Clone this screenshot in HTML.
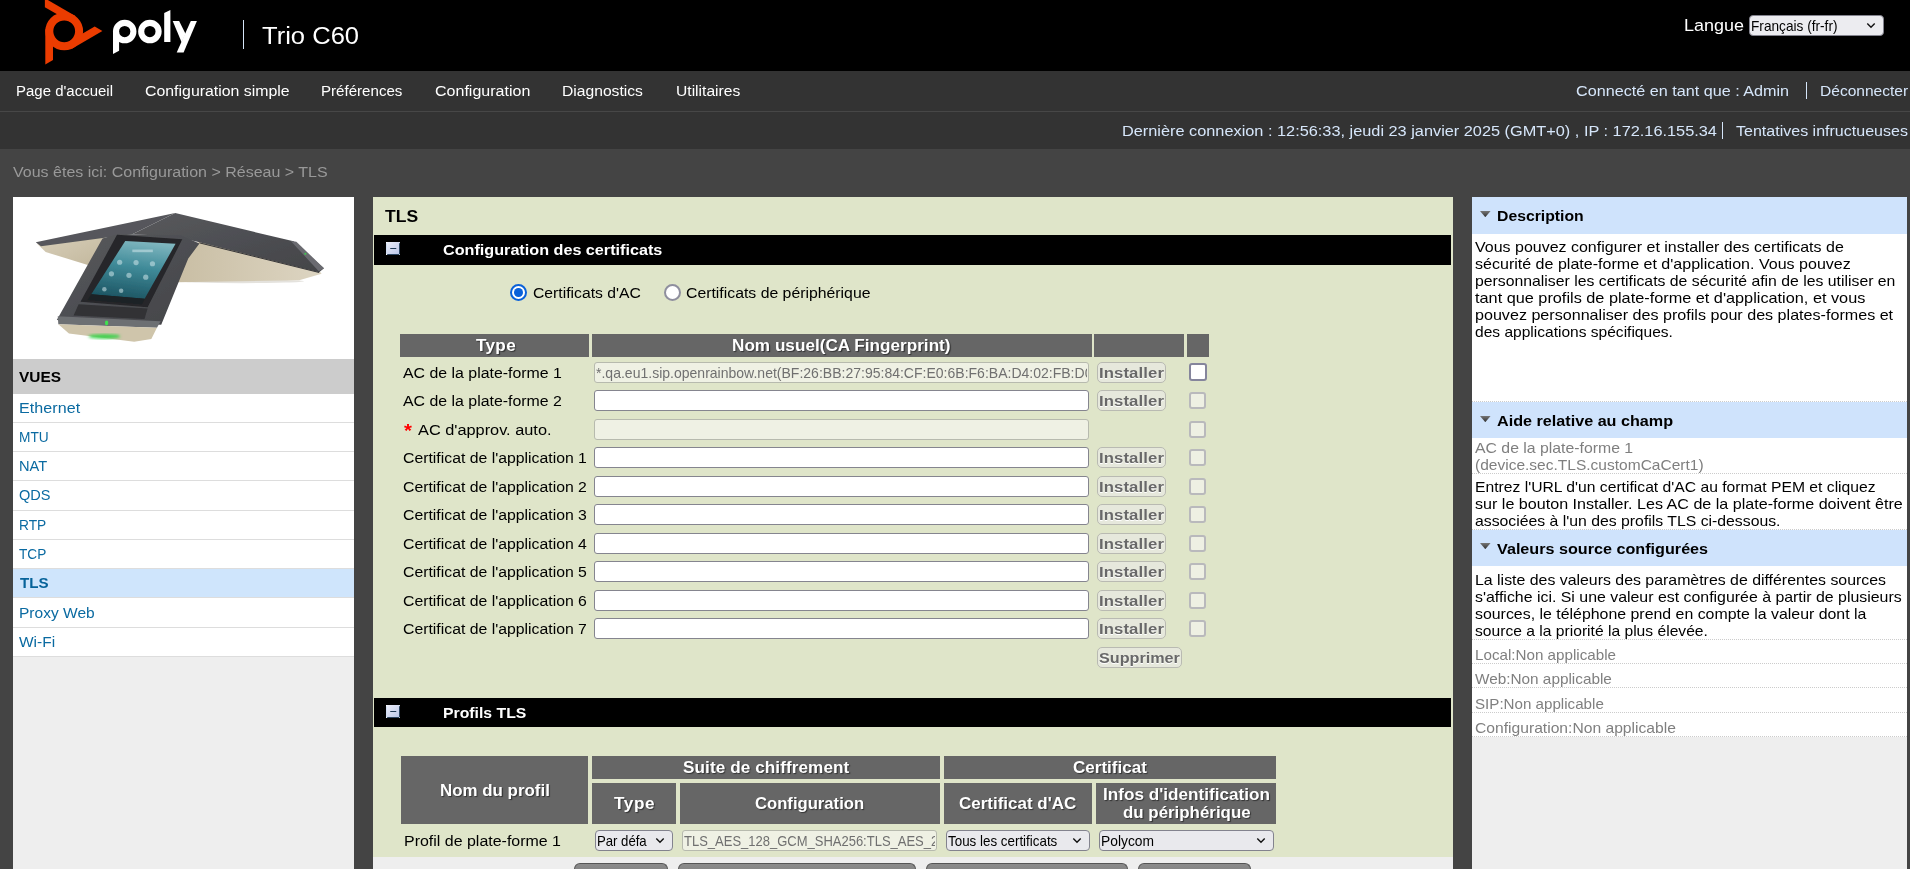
<!DOCTYPE html>
<html lang="fr"><head><meta charset="utf-8"><title>Poly Trio C60 - TLS</title>
<style>
html,body{margin:0;padding:0}
html{width:1910px;height:869px;overflow:hidden}
body{width:1910px;height:869px;overflow:hidden;position:relative;background:#444;font-family:"Liberation Sans",sans-serif;}
.a{position:absolute}
.t{position:absolute;white-space:pre;line-height:normal;transform-origin:0 0;font-family:"Liberation Sans",sans-serif}
.th{position:absolute;background:#666}
.inp{position:absolute;box-sizing:border-box;height:20.3px;border:1px solid #85858f;border-radius:3px;background:#fff;overflow:hidden}
.inp.dis{background:#eff1e4;border-color:#b7baae}
.btn{position:absolute;box-sizing:border-box;height:20.4px;border:1px solid #b9bab2;border-radius:5px;background:#e6e8dc}
.cb{position:absolute;box-sizing:border-box;width:17px;height:17px;border:2px solid #b9b9bc;border-radius:3px;background:#eef0e3}
.cb.on{width:17.6px;height:17.6px;border:2px solid #85859c;background:#fff}
.sel{position:absolute;box-sizing:border-box;height:20.5px;border:1px solid #83838e;border-radius:4px;background:#e9e9ed}
.li{position:absolute;left:13px;width:341px;background:#fff;border-bottom:1px solid #ddd;box-sizing:border-box}
.dot{position:absolute;left:1472px;width:435px;height:0;border-top:1px dotted #ccc}
.rh{position:absolute;left:1472px;width:435px;background:#cfe3fc}
.tri{position:absolute;width:0;height:0;border-left:5.2px solid transparent;border-right:5.2px solid transparent;border-top:6px solid #555}
.bb{position:absolute;top:863px;height:6px;box-sizing:border-box;border:1px solid #555;border-bottom:none;border-radius:7px 7px 0 0;background:linear-gradient(#8b8b8b,#868686)}
</style></head>
<body>
<!-- header -->
<div class="a" style="left:0;top:0;width:1910px;height:71px;background:#000"></div>
<svg class="a" style="left:0;top:0" width="240" height="71" viewBox="0 0 240 71">
<g transform="translate(64.2,31.3)" fill="#eb3c00">
<circle r="14.9" fill="none" stroke="#eb3c00" stroke-width="8"/>
<polygon id="bl" points="-18.9,-2 -18.9,33.2 -11.2,28.75 -11.2,-2"/>
<polygon points="-18.9,-2 -18.9,33.2 -11.2,28.75 -11.2,-2" transform="rotate(120)"/>
<polygon points="-18.9,-2 -18.9,33.2 -11.2,28.75 -11.2,-2" transform="rotate(240)"/>
</g>
<g fill="#fff">
<circle cx="124.7" cy="31.6" r="8.7" fill="none" stroke="#fff" stroke-width="6.1"/>
<polygon points="113,31.6 119.1,31.6 119.1,50.8 113,54.1"/>
<circle cx="149.9" cy="31.6" r="8.7" fill="none" stroke="#fff" stroke-width="6.1"/>
<polygon points="164.2,12.9 170.4,10 170.4,41.9 164.2,41.9"/>
<polygon points="190.8,21.1 196.9,21.1 183.6,52.4 176.7,52.4"/>
<polygon points="172.7,21.1 179.1,21.1 185.6,34 181.6,42.2"/>
</g>
</svg>

<div class="a" style="left:243px;top:20px;width:1px;height:29px;background:#d5e5f7"></div>
<div class="sel" style="left:1749px;top:15px;width:134.5px;height:21px;background:#ececf0"></div>
<svg class="a" style="left:1866px;top:22px" width="10" height="8" viewBox="0 0 10 8"><path d="M1.3 1.6 L5 5.3 L8.7 1.6" fill="none" stroke="#111" stroke-width="1.4"/></svg>
<!-- nav -->
<div class="a" style="left:0;top:71px;width:1910px;height:39.5px;background:#333"></div>
<div class="a" style="left:0;top:110.5px;width:1910px;height:1px;background:#474747"></div>
<div class="a" style="left:0;top:111.5px;width:1910px;height:37.5px;background:#333"></div>
<div class="a" style="left:1806px;top:82px;width:1px;height:17px;background:#d6e6fa"></div>
<div class="a" style="left:1722px;top:122px;width:1px;height:17px;background:#d6e6fa"></div>
<!-- left panel -->
<div class="a" style="left:13px;top:197px;width:341px;height:162px;background:#fff"></div>
<svg class="a" style="left:13px;top:197px" width="341" height="162" viewBox="0 0 1829 869">
<defs>
<linearGradient id="gold1" x1="0" y1="0" x2="1" y2="1"><stop offset="0" stop-color="#d8cfba"/><stop offset="1" stop-color="#c2b79c"/></linearGradient>
<linearGradient id="gold2" x1="0" y1="0" x2="1" y2="0"><stop offset="0" stop-color="#c9bea4"/><stop offset="1" stop-color="#ddd5c2"/></linearGradient>
<linearGradient id="fab" x1="0" y1="0" x2="1" y2="1"><stop offset="0" stop-color="#58595d"/><stop offset="1" stop-color="#434448"/></linearGradient>
<linearGradient id="scr" x1="0.6" y1="0" x2="0.4" y2="1"><stop offset="0" stop-color="#7fb6bf"/><stop offset="0.45" stop-color="#3f8a98"/><stop offset="1" stop-color="#1d5563"/></linearGradient>
<filter id="bl1"><feGaussianBlur stdDeviation="3"/></filter>
<filter id="bl2"><feGaussianBlur stdDeviation="9"/></filter>
</defs>
<g filter="url(#bl1)">
<!-- soft shadow -->
<ellipse cx="1230" cy="452" rx="330" ry="10" fill="#e4e2dd"/>
<!-- left wing -->
<polygon points="128,250 500,208 410,368 175,295" fill="url(#gold1)"/>
<polygon points="122,243 870,86 640,200 492,218 150,264" fill="#56575b"/>
<!-- right wing gold side -->
<polygon points="1000,240 1645,398 1655,412 1535,447 880,457 880,300" fill="url(#gold2)"/>
<!-- right wing dark top -->
<polygon points="870,86 1505,238 1668,382 1642,404 1000,243 860,210 640,200" fill="url(#fab)"/>
<polygon points="1490,236 1520,240 1668,382 1640,398" fill="#6a6b70"/>
<line x1="1000" y1="246" x2="1642" y2="405" stroke="#2b2b2e" stroke-width="5"/>
<!-- front leg fabric top -->
<polygon points="480,222 560,198 900,205 1000,250 940,330 795,685 235,660" fill="url(#fab)"/>
<!-- bezel -->
<polygon points="558,203 908,226 722,592 362,562" fill="#262629"/>
<polygon points="352,575 722,598 705,655 325,635" fill="#303135"/>
<!-- screen -->
<polygon points="602,236 872,251 706,546 420,521" fill="url(#scr)"/>
<!-- screen nav bar -->
<polygon points="420,521 706,546 692,575 400,552" fill="#1c2226"/>
<!-- front band -->
<polygon points="240,640 792,666 772,702 243,682" fill="#6d6f73"/>
<!-- gold base -->
<polygon points="243,682 772,702 742,762 650,777 300,732" fill="#cfc5ab"/>
</g>
<ellipse cx="490" cy="748" rx="85" ry="12" fill="#38d24a" filter="url(#bl2)"/>
<ellipse cx="502" cy="676" rx="9" ry="13" fill="#3fe04f" filter="url(#bl1)"/>
<circle cx="1568" cy="305" r="6" fill="#3fc04f" filter="url(#bl1)"/>
<!-- screen icons (faint) -->
<g fill="#cfe6ea" opacity=".55" filter="url(#bl1)">
<rect x="640" y="282" width="110" height="14"/>
<circle cx="572" cy="350" r="14"/><circle cx="660" cy="352" r="14"/><circle cx="748" cy="358" r="14"/>
<circle cx="528" cy="412" r="14"/><circle cx="622" cy="420" r="14"/><circle cx="712" cy="430" r="14"/>
<circle cx="490" cy="495" r="12"/><circle cx="580" cy="503" r="12"/>
</g>
</svg>

<div class="a" style="left:13px;top:359px;width:341px;height:35px;background:#ccc"></div>
<div class="li" style="top:394px;height:29px"></div>
<div class="li" style="top:423px;height:29px"></div>
<div class="li" style="top:452px;height:29px"></div>
<div class="li" style="top:481px;height:30px"></div>
<div class="li" style="top:511px;height:29px"></div>
<div class="li" style="top:540px;height:29px"></div>
<div class="li" style="top:569px;height:29px;background:#cfe5fc"></div>
<div class="li" style="top:598px;height:29.5px"></div>
<div class="li" style="top:627.5px;height:29px"></div>
<div class="a" style="left:13px;top:656.5px;width:341px;height:212.5px;background:#eee"></div>
<!-- main panel -->
<div class="a" style="left:373px;top:197px;width:1080px;height:660px;background:#dfe5c9"></div>
<div class="a" style="left:373px;top:857px;width:1080px;height:12px;background:#eee"></div>
<div class="a" style="left:374px;top:235px;width:1077px;height:30px;background:#000"></div>
<div class="a" style="left:374px;top:698px;width:1077px;height:29px;background:#000"></div>
<svg class="a" style="left:385.8px;top:241.8px" width="14.4" height="13.4" viewBox="0 0 14.4 13.4">
<defs><linearGradient id="ig241" x1="0" y1="0" x2="1" y2="1"><stop offset="0" stop-color="#eef0fb"/><stop offset="1" stop-color="#bcc8ea"/></linearGradient></defs>
<rect x="0" y="0" width="14.4" height="13.4" fill="#2b4561"/>
<rect x="0" y="0" width="13" height="12" fill="url(#ig241)"/>
<rect x="0" y="0" width="1" height="13.4" fill="#cfdcf2"/>
<rect x="0" y="0" width="1.2" height="1.2" fill="#fff"/><rect x="13.2" y="0" width="1.2" height="1.2" fill="#fff"/>
<rect x="0" y="12.2" width="1.2" height="1.2" fill="#fff"/><rect x="13.2" y="12.2" width="1.2" height="1.2" fill="#fff"/>
<rect x="4.1" y="5.9" width="6.3" height="1.2" rx=".5" fill="#1f3a56"/>
</svg>
<svg class="a" style="left:385.9px;top:704.7px" width="14.4" height="13.4" viewBox="0 0 14.4 13.4">
<defs><linearGradient id="ig704" x1="0" y1="0" x2="1" y2="1"><stop offset="0" stop-color="#eef0fb"/><stop offset="1" stop-color="#bcc8ea"/></linearGradient></defs>
<rect x="0" y="0" width="14.4" height="13.4" fill="#2b4561"/>
<rect x="0" y="0" width="13" height="12" fill="url(#ig704)"/>
<rect x="0" y="0" width="1" height="13.4" fill="#cfdcf2"/>
<rect x="0" y="0" width="1.2" height="1.2" fill="#fff"/><rect x="13.2" y="0" width="1.2" height="1.2" fill="#fff"/>
<rect x="0" y="12.2" width="1.2" height="1.2" fill="#fff"/><rect x="13.2" y="12.2" width="1.2" height="1.2" fill="#fff"/>
<rect x="4.1" y="5.9" width="6.3" height="1.2" rx=".5" fill="#1f3a56"/>
</svg>
<!-- radios -->
<div class="a" style="left:510px;top:283.9px;width:17px;height:17px;box-sizing:border-box;border:2.1px solid #0a61d9;border-radius:50%;background:#fff"></div>
<div class="a" style="left:514.1px;top:288px;width:8.8px;height:8.8px;border-radius:50%;background:#0a61d9"></div>
<div class="a" style="left:664px;top:283.9px;width:17px;height:17px;box-sizing:border-box;border:2px solid #8f8f9e;border-radius:50%;background:#fff"></div>
<!-- table 1 header -->
<div class="th" style="left:400px;top:334.3px;width:189px;height:22.5px"></div>
<div class="th" style="left:592px;top:334.3px;width:500px;height:22.5px"></div>
<div class="th" style="left:1094.3px;top:334.3px;width:89.7px;height:22.5px"></div>
<div class="th" style="left:1187px;top:334.3px;width:22px;height:22.5px"></div>
<div class="inp dis" style="left:594.2px;top:362.3px;width:494.6px"></div>
<div class="btn" style="left:1097.2px;top:362.3px;width:68.6px"></div>
<div class="cb on" style="left:1189.2px;top:363.2px"></div>
<div class="inp" style="left:594.2px;top:390.3px;width:494.6px"></div>
<div class="btn" style="left:1097.2px;top:390.3px;width:68.6px"></div>
<div class="cb" style="left:1189.3px;top:392.4px"></div>
<div class="inp dis" style="left:594.2px;top:419.3px;width:494.6px"></div>
<div class="cb" style="left:1189.3px;top:420.9px"></div>
<div class="inp" style="left:594.2px;top:447.3px;width:494.6px"></div>
<div class="btn" style="left:1097.2px;top:447.3px;width:68.6px"></div>
<div class="cb" style="left:1189.3px;top:449.4px"></div>
<div class="inp" style="left:594.2px;top:476.3px;width:494.6px"></div>
<div class="btn" style="left:1097.2px;top:476.3px;width:68.6px"></div>
<div class="cb" style="left:1189.3px;top:477.8px"></div>
<div class="inp" style="left:594.2px;top:504.3px;width:494.6px"></div>
<div class="btn" style="left:1097.2px;top:504.3px;width:68.6px"></div>
<div class="cb" style="left:1189.3px;top:506.2px"></div>
<div class="inp" style="left:594.2px;top:533.3px;width:494.6px"></div>
<div class="btn" style="left:1097.2px;top:533.3px;width:68.6px"></div>
<div class="cb" style="left:1189.3px;top:534.7px"></div>
<div class="inp" style="left:594.2px;top:561.3px;width:494.6px"></div>
<div class="btn" style="left:1097.2px;top:561.3px;width:68.6px"></div>
<div class="cb" style="left:1189.3px;top:563.1px"></div>
<div class="inp" style="left:594.2px;top:590.3px;width:494.6px"></div>
<div class="btn" style="left:1097.2px;top:590.3px;width:68.6px"></div>
<div class="cb" style="left:1189.3px;top:591.6px"></div>
<div class="inp" style="left:594.2px;top:618.3px;width:494.6px"></div>
<div class="btn" style="left:1097.2px;top:618.3px;width:68.6px"></div>
<div class="cb" style="left:1189.3px;top:620.0px"></div>
<div class="btn" style="left:1097.2px;top:647.3px;width:84.6px"></div>
<!-- table 2 header -->
<div class="th" style="left:401px;top:756.3px;width:187px;height:67.3px"></div>
<div class="th" style="left:592px;top:756.3px;width:348px;height:22.5px"></div>
<div class="th" style="left:592px;top:782.9px;width:83.8px;height:40.7px"></div>
<div class="th" style="left:680px;top:782.9px;width:260px;height:40.7px"></div>
<div class="th" style="left:944.2px;top:756.3px;width:331.7px;height:22.5px"></div>
<div class="th" style="left:944.2px;top:782.9px;width:147.5px;height:40.7px"></div>
<div class="th" style="left:1096.2px;top:782.9px;width:179.7px;height:40.7px"></div>
<!-- row selects -->
<div class="sel" style="left:595.3px;top:830.3px;width:77.3px"></div>
<svg class="a" style="left:654.5px;top:837px" width="10" height="8" viewBox="0 0 10 8"><path d="M1.3 1.6 L5 5.3 L8.7 1.6" fill="none" stroke="#111" stroke-width="1.4"/></svg>
<div class="inp dis" style="left:682.2px;top:830.1px;width:254.6px;height:20.6px"></div>
<div class="sel" style="left:946.1px;top:830.3px;width:143.5px"></div>
<svg class="a" style="left:1071.5px;top:837px" width="10" height="8" viewBox="0 0 10 8"><path d="M1.3 1.6 L5 5.3 L8.7 1.6" fill="none" stroke="#111" stroke-width="1.4"/></svg>
<div class="sel" style="left:1099.2px;top:830.3px;width:174.4px"></div>
<svg class="a" style="left:1255.5px;top:837px" width="10" height="8" viewBox="0 0 10 8"><path d="M1.3 1.6 L5 5.3 L8.7 1.6" fill="none" stroke="#111" stroke-width="1.4"/></svg>
<!-- bottom buttons -->
<div class="bb" style="left:574px;width:94px"></div>
<div class="bb" style="left:678px;width:238px"></div>
<div class="bb" style="left:926px;width:202px"></div>
<div class="bb" style="left:1138px;width:113px"></div>
<!-- right panel -->
<div class="a" style="left:1472px;top:197px;width:435px;height:540px;background:#fff"></div>
<div class="a" style="left:1472px;top:737px;width:435px;height:132px;background:#eee"></div>
<div class="rh" style="top:197px;height:37px"></div>
<div class="rh" style="top:401.5px;height:36.5px"></div>
<div class="rh" style="top:530px;height:36px"></div>
<svg class="a" style="left:1480.3px;top:211.3px" width="10.6" height="6.2" viewBox="0 0 10.6 6.2"><defs><linearGradient id="tg211_3" x1="0" y1="0" x2="0" y2="1"><stop offset="0" stop-color="#777"/><stop offset="1" stop-color="#2f2f2f"/></linearGradient></defs><polygon points="0,0 10.6,0 5.3,6.2" fill="url(#tg211_3)"/></svg>
<svg class="a" style="left:1480.3px;top:415.6px" width="10.6" height="6.2" viewBox="0 0 10.6 6.2"><defs><linearGradient id="tg415_6" x1="0" y1="0" x2="0" y2="1"><stop offset="0" stop-color="#777"/><stop offset="1" stop-color="#2f2f2f"/></linearGradient></defs><polygon points="0,0 10.6,0 5.3,6.2" fill="url(#tg415_6)"/></svg>
<svg class="a" style="left:1480.3px;top:543.3px" width="10.6" height="6.2" viewBox="0 0 10.6 6.2"><defs><linearGradient id="tg543_3" x1="0" y1="0" x2="0" y2="1"><stop offset="0" stop-color="#777"/><stop offset="1" stop-color="#2f2f2f"/></linearGradient></defs><polygon points="0,0 10.6,0 5.3,6.2" fill="url(#tg543_3)"/></svg>
<div class="dot" style="top:400.5px"></div>
<div class="dot" style="top:473px"></div>
<div class="dot" style="top:529px"></div>
<div class="dot" style="top:638.7px"></div>
<div class="dot" style="top:662.8px"></div>
<div class="dot" style="top:687px"></div>
<div class="dot" style="top:711.8px"></div>
<div class="dot" style="top:736px"></div>
<!-- texts -->
<span class="t" style="left:261.9px;top:22.0px;font-size:24.2px;color:#fff;transform:scaleX(1.0571);">Trio C60</span>
<span class="t" style="left:1684.1px;top:16.0px;font-size:16.8px;color:#fff;transform:scaleX(1.0714);">Langue</span>
<span class="t" style="left:15.8px;top:82.0px;font-size:15.2px;color:#fff;transform:scaleX(0.9866);">Page d&#x27;accueil</span>
<span class="t" style="left:144.8px;top:82.0px;font-size:15.2px;color:#fff;transform:scaleX(1.0451);">Configuration simple</span>
<span class="t" style="left:320.7px;top:82.0px;font-size:15.2px;color:#fff;transform:scaleX(0.9940);">Préférences</span>
<span class="t" style="left:435.0px;top:82.0px;font-size:15.2px;color:#fff;transform:scaleX(1.0549);">Configuration</span>
<span class="t" style="left:562.2px;top:82.0px;font-size:15.2px;color:#fff;transform:scaleX(1.0304);">Diagnostics</span>
<span class="t" style="left:675.8px;top:82.0px;font-size:15.2px;color:#fff;transform:scaleX(1.0296);">Utilitaires</span>
<span class="t" style="left:1576.0px;top:82.0px;font-size:15.2px;color:#d6e6fa;transform:scaleX(1.0649);">Connecté en tant que : Admin</span>
<span class="t" style="left:1819.8px;top:82.0px;font-size:15.2px;color:#d6e6fa;transform:scaleX(1.0241);">Déconnecter</span>
<span class="t" style="left:1122.1px;top:122.0px;font-size:15.2px;color:#d6e6fa;transform:scaleX(1.0738);">Dernière connexion : 12:56:33, jeudi 23 janvier 2025 (GMT+0) , IP : 172.16.155.34</span>
<span class="t" style="left:1736.1px;top:122.0px;font-size:15.2px;color:#d6e6fa;transform:scaleX(1.0550);">Tentatives infructueuses</span>
<span class="t" style="left:12.5px;top:163.0px;font-size:15.2px;color:#999;transform:scaleX(1.0539);">Vous êtes ici: Configuration &gt; Réseau &gt; TLS</span>
<span class="t" style="left:19.1px;top:369.0px;font-size:14.6px;font-weight:700;transform:scaleX(1.0566);">VUES</span>
<span class="t" style="left:19.1px;top:400.0px;font-size:14.6px;color:#0a6aa1;letter-spacing:0.079px;transform:scaleX(1.1000);">Ethernet</span>
<span class="t" style="left:19.1px;top:429.0px;font-size:14.6px;color:#0a6aa1;transform:scaleX(0.9391);">MTU</span>
<span class="t" style="left:19.1px;top:458.0px;font-size:14.6px;color:#0a6aa1;transform:scaleX(1.0032);">NAT</span>
<span class="t" style="left:19.1px;top:487.0px;font-size:14.6px;color:#0a6aa1;transform:scaleX(0.9960);">QDS</span>
<span class="t" style="left:19.1px;top:517.0px;font-size:14.6px;color:#0a6aa1;transform:scaleX(0.9434);">RTP</span>
<span class="t" style="left:19.1px;top:546.0px;font-size:14.6px;color:#0a6aa1;transform:scaleX(0.9353);">TCP</span>
<span class="t" style="left:19.6px;top:575.0px;font-size:14.6px;font-weight:700;color:#07639a;transform:scaleX(1.0371);">TLS</span>
<span class="t" style="left:19.1px;top:605.0px;font-size:14.6px;color:#0a6aa1;transform:scaleX(1.0646);">Proxy Web</span>
<span class="t" style="left:19.1px;top:634.0px;font-size:14.6px;color:#0a6aa1;transform:scaleX(1.0603);">Wi-Fi</span>
<span class="t" style="left:385.3px;top:207.0px;font-size:16.6px;font-weight:700;transform:scaleX(1.0560);">TLS</span>
<span class="t" style="left:443.3px;top:241.0px;font-size:15.2px;font-weight:700;color:#fff;transform:scaleX(1.0650);">Configuration des certificats</span>
<span class="t" style="left:533.1px;top:284.0px;font-size:15.2px;transform:scaleX(1.0347);">Certificats d&#x27;AC</span>
<span class="t" style="left:686.1px;top:284.0px;font-size:15.2px;transform:scaleX(1.0406);">Certificats de périphérique</span>
<span class="t" style="left:475.6px;top:337.0px;font-size:15.6px;font-weight:700;color:#fff;letter-spacing:0.280px;transform:scaleX(1.1000);text-shadow:1px 1px 1px rgba(0,0,0,.5);">Type</span>
<span class="t" style="left:732.2px;top:337.0px;font-size:15.6px;font-weight:700;color:#fff;transform:scaleX(1.1000);text-shadow:1px 1px 1px rgba(0,0,0,.5);">Nom usuel(CA Fingerprint)</span>
<span class="t" style="left:402.7px;top:364.0px;font-size:15.2px;transform:scaleX(1.0457);">AC de la plate-forme 1</span>
<span class="t" style="left:402.7px;top:392.0px;font-size:15.2px;transform:scaleX(1.0457);">AC de la plate-forme 2</span>
<span class="t" style="left:403.5px;top:420.0px;font-size:18.5px;font-weight:700;color:#f00;letter-spacing:0.797px;transform:scaleX(1.1000);">*</span>
<span class="t" style="left:417.5px;top:421.0px;font-size:15.2px;transform:scaleX(1.0749);">AC d&#x27;approv. auto.</span>
<span class="t" style="left:402.7px;top:449.0px;font-size:15.2px;transform:scaleX(1.0401);">Certificat de l&#x27;application 1</span>
<span class="t" style="left:402.7px;top:478.0px;font-size:15.2px;transform:scaleX(1.0401);">Certificat de l&#x27;application 2</span>
<span class="t" style="left:402.7px;top:506.0px;font-size:15.2px;transform:scaleX(1.0401);">Certificat de l&#x27;application 3</span>
<span class="t" style="left:402.7px;top:535.0px;font-size:15.2px;transform:scaleX(1.0401);">Certificat de l&#x27;application 4</span>
<span class="t" style="left:402.7px;top:563.0px;font-size:15.2px;transform:scaleX(1.0401);">Certificat de l&#x27;application 5</span>
<span class="t" style="left:402.7px;top:592.0px;font-size:15.2px;transform:scaleX(1.0401);">Certificat de l&#x27;application 6</span>
<span class="t" style="left:402.7px;top:620.0px;font-size:15.2px;transform:scaleX(1.0401);">Certificat de l&#x27;application 7</span>
<span class="t" style="left:443.1px;top:704.0px;font-size:15.2px;font-weight:700;color:#fff;transform:scaleX(1.0390);">Profils TLS</span>
<span class="t" style="left:403.8px;top:832.0px;font-size:15.2px;transform:scaleX(1.0507);">Profil de plate-forme 1</span>
<span class="t" style="left:1497.1px;top:208.0px;font-size:14.8px;font-weight:700;transform:scaleX(1.0650);">Description</span>
<span class="t" style="left:1475.3px;top:239.0px;font-size:14.8px;transform:scaleX(1.0804);">Vous pouvez configurer et installer des certificats de</span>
<span class="t" style="left:1475.3px;top:256.0px;font-size:14.8px;transform:scaleX(1.0841);">sécurité de plate-forme et d&#x27;application. Vous pouvez</span>
<span class="t" style="left:1475.3px;top:273.0px;font-size:14.8px;transform:scaleX(1.0671);">personnaliser les certificats de sécurité afin de les utiliser en</span>
<span class="t" style="left:1475.3px;top:290.0px;font-size:14.8px;transform:scaleX(1.1000);">tant que profils de plate-forme et d&#x27;application, et vous</span>
<span class="t" style="left:1475.3px;top:307.0px;font-size:14.8px;transform:scaleX(1.0885);">pouvez personnaliser des profils pour des plates-formes et</span>
<span class="t" style="left:1475.3px;top:324.0px;font-size:14.8px;transform:scaleX(1.0506);">des applications spécifiques.</span>
<span class="t" style="left:1497.1px;top:413.0px;font-size:14.8px;font-weight:700;transform:scaleX(1.0925);">Aide relative au champ</span>
<span class="t" style="left:1475.3px;top:440.0px;font-size:14.8px;color:#7f7f7f;transform:scaleX(1.0679);">AC de la plate-forme 1</span>
<span class="t" style="left:1475.3px;top:457.0px;font-size:14.8px;color:#7f7f7f;transform:scaleX(1.0490);">(device.sec.TLS.customCaCert1)</span>
<span class="t" style="left:1475.3px;top:479.0px;font-size:14.8px;transform:scaleX(1.0598);">Entrez l&#x27;URL d&#x27;un certificat d&#x27;AC au format PEM et cliquez</span>
<span class="t" style="left:1475.3px;top:496.0px;font-size:14.8px;transform:scaleX(1.0881);">sur le bouton Installer. Les AC de la plate-forme doivent être</span>
<span class="t" style="left:1475.3px;top:513.0px;font-size:14.8px;transform:scaleX(1.0670);">associées à l&#x27;un des profils TLS ci-dessous.</span>
<span class="t" style="left:1497.1px;top:541.0px;font-size:14.8px;font-weight:700;transform:scaleX(1.0923);">Valeurs source configurées</span>
<span class="t" style="left:1475.3px;top:572.0px;font-size:14.8px;transform:scaleX(1.0731);">La liste des valeurs des paramètres de différentes sources</span>
<span class="t" style="left:1475.3px;top:589.0px;font-size:14.8px;transform:scaleX(1.0738);">s&#x27;affiche ici. Si une valeur est configurée à partir de plusieurs</span>
<span class="t" style="left:1475.3px;top:606.0px;font-size:14.8px;transform:scaleX(1.0741);">sources, le téléphone prend en compte la valeur dont la</span>
<span class="t" style="left:1475.3px;top:623.0px;font-size:14.8px;transform:scaleX(1.0565);">source a la priorité la plus élevée.</span>
<span class="t" style="left:1475.3px;top:647.0px;font-size:14.8px;color:#7f7f7f;transform:scaleX(1.0263);">Local:Non applicable</span>
<span class="t" style="left:1475.3px;top:671.0px;font-size:14.8px;color:#7f7f7f;transform:scaleX(1.0358);">Web:Non applicable</span>
<span class="t" style="left:1475.3px;top:696.0px;font-size:14.8px;color:#7f7f7f;transform:scaleX(1.0234);">SIP:Non applicable</span>
<span class="t" style="left:1475.3px;top:720.0px;font-size:14.8px;color:#7f7f7f;transform:scaleX(1.0572);">Configuration:Non applicable</span>
<span class="t" style="left:1099.3px;top:364.0px;font-size:15.2px;font-weight:700;color:#686868;letter-spacing:0.094px;transform:scaleX(1.1000);text-shadow:0 1px 0 #fff;">Installer</span>
<span class="t" style="left:1099.3px;top:392.0px;font-size:15.2px;font-weight:700;color:#686868;letter-spacing:0.094px;transform:scaleX(1.1000);text-shadow:0 1px 0 #fff;">Installer</span>
<span class="t" style="left:1099.3px;top:449.0px;font-size:15.2px;font-weight:700;color:#686868;letter-spacing:0.094px;transform:scaleX(1.1000);text-shadow:0 1px 0 #fff;">Installer</span>
<span class="t" style="left:1099.3px;top:478.0px;font-size:15.2px;font-weight:700;color:#686868;letter-spacing:0.094px;transform:scaleX(1.1000);text-shadow:0 1px 0 #fff;">Installer</span>
<span class="t" style="left:1099.3px;top:506.0px;font-size:15.2px;font-weight:700;color:#686868;letter-spacing:0.094px;transform:scaleX(1.1000);text-shadow:0 1px 0 #fff;">Installer</span>
<span class="t" style="left:1099.3px;top:535.0px;font-size:15.2px;font-weight:700;color:#686868;letter-spacing:0.094px;transform:scaleX(1.1000);text-shadow:0 1px 0 #fff;">Installer</span>
<span class="t" style="left:1099.3px;top:563.0px;font-size:15.2px;font-weight:700;color:#686868;letter-spacing:0.094px;transform:scaleX(1.1000);text-shadow:0 1px 0 #fff;">Installer</span>
<span class="t" style="left:1099.3px;top:592.0px;font-size:15.2px;font-weight:700;color:#686868;letter-spacing:0.094px;transform:scaleX(1.1000);text-shadow:0 1px 0 #fff;">Installer</span>
<span class="t" style="left:1099.3px;top:620.0px;font-size:15.2px;font-weight:700;color:#686868;letter-spacing:0.094px;transform:scaleX(1.1000);text-shadow:0 1px 0 #fff;">Installer</span>
<span class="t" style="left:1099.2px;top:649.0px;font-size:15.2px;font-weight:700;color:#686868;transform:scaleX(1.0651);text-shadow:0 1px 0 #fff;">Supprimer</span>
<span class="t" style="left:439.7px;top:782.0px;font-size:15.6px;font-weight:700;color:#fff;transform:scaleX(1.0843);text-shadow:1px 1px 1px rgba(0,0,0,.5);">Nom du profil</span>
<span class="t" style="left:682.8px;top:759.0px;font-size:15.6px;font-weight:700;color:#fff;letter-spacing:0.067px;transform:scaleX(1.1000);text-shadow:1px 1px 1px rgba(0,0,0,.5);">Suite de chiffrement</span>
<span class="t" style="left:613.9px;top:795.0px;font-size:15.6px;font-weight:700;color:#fff;letter-spacing:0.523px;transform:scaleX(1.1000);text-shadow:1px 1px 1px rgba(0,0,0,.5);">Type</span>
<span class="t" style="left:755.1px;top:795.0px;font-size:15.6px;font-weight:700;color:#fff;transform:scaleX(1.0673);text-shadow:1px 1px 1px rgba(0,0,0,.5);">Configuration</span>
<span class="t" style="left:1073.1px;top:759.0px;font-size:15.6px;font-weight:700;color:#fff;transform:scaleX(1.0933);text-shadow:1px 1px 1px rgba(0,0,0,.5);">Certificat</span>
<span class="t" style="left:959.3px;top:795.0px;font-size:15.6px;font-weight:700;color:#fff;transform:scaleX(1.0893);text-shadow:1px 1px 1px rgba(0,0,0,.5);">Certificat d&#x27;AC</span>
<span class="t" style="left:1103.3px;top:786.0px;font-size:15.6px;font-weight:700;color:#fff;transform:scaleX(1.0992);text-shadow:1px 1px 1px rgba(0,0,0,.5);">Infos d&#x27;identification</span>
<span class="t" style="left:1122.9px;top:804.0px;font-size:15.6px;font-weight:700;color:#fff;transform:scaleX(1.0828);text-shadow:1px 1px 1px rgba(0,0,0,.5);">du périphérique</span>
<span class="t" style="left:1751.0px;top:17.0px;font-size:15.0px;transform:scaleX(0.9105);">Français (fr-fr)</span>
<span class="t" style="left:597.1px;top:832.0px;font-size:15.0px;letter-spacing:-0.034px;transform:scaleX(0.8800);">Par défa</span>
<span class="t" style="left:948.0px;top:832.0px;font-size:15.0px;transform:scaleX(0.8919);">Tous les certificats</span>
<span class="t" style="left:1100.8px;top:832.0px;font-size:15.0px;transform:scaleX(0.9212);">Polycom</span>
<div class="a" style="left:595.2px;top:363.3px;width:492.0px;height:18.3px;overflow:hidden"><span class="t" style="left:0.9px;top:1.7px;font-size:14.3px;color:#707070;transform:scaleX(0.9806);">*.qa.eu1.sip.openrainbow.net(BF:26:BB:27:95:84:CF:E0:6B:F6:BA:D4:02:FB:D0:5C:11:A9:3E</span></div>
<div class="a" style="left:683.0px;top:831.7px;width:252.3px;height:18.3px;overflow:hidden"><span class="t" style="left:0.7px;top:1.3px;font-size:14.3px;color:#707070;transform:scaleX(0.9088);">TLS_AES_128_GCM_SHA256:TLS_AES_256_GCM_SHA384:TLS_CHACHA20</span></div>
</body></html>
